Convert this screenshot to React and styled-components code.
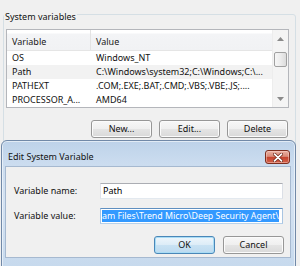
import React from 'react';
import styled, { createGlobalStyle } from 'styled-components';

const Global = createGlobalStyle`
  html, body { margin: 0; padding: 0; }
  body {
    background: #f0f0f0;
    font-family: "Noto Sans", "Open Sans", sans-serif;
    font-size: 9px;
    color: #000;
  }
`;

const Page = styled.div`
  position: relative;
  width: 300px;
  height: 266px;
  overflow: hidden;
  background: #f0f0f0;
  padding-top: 5px;
  box-sizing: border-box;
`;

const GroupBox = styled.fieldset`
  box-sizing: border-box;
  width: 293px;
  min-width: 0;
  margin: 0 0 0 3px;
  padding: 6px 6px 60px 2px;
  border: 1px solid #d5dfe5;
  border-radius: 3px;
`;

const Legend = styled.legend`
  padding: 6px 1px 0;
  margin-left: -2px;
  font-size: 9px;
  line-height: 12px;
  color: #111;
`;

const ListBox = styled.div`
  display: flex;
  width: 283px;
  height: 79px;
  box-sizing: border-box;
  border: 1px solid #b4b6bb;
  background: #fff;
`;

const Table = styled.div`
  flex: 1;
  display: flex;
  flex-direction: column;
  min-width: 0;
`;

const HeaderRow = styled.div`
  display: grid;
  grid-template-columns: 84px 1fr;
  height: 21px;
  background: linear-gradient(#ffffff 0%, #ffffff 15%, #f3f4f6 20%, #f1f2f4 100%);
  border-bottom: 1px solid #e5e5e5;
  box-sizing: border-box;
`;

const HeaderCell = styled.div`
  padding-left: 5px;
  line-height: 23px;
  white-space: nowrap;
  overflow: hidden;
  color: #1a1a1a;
  border-right: ${(p) => (p.$sep ? '1px solid #e3e3e3' : 'none')};
`;

const Row = styled.div`
  display: grid;
  grid-template-columns: 84px 1fr;
  height: 14px;
  background: ${(p) => (p.$hot ? '#f2f2f2' : '#fff')};
`;

const Cell = styled.div`
  padding-left: 5px;
  line-height: 14px;
  white-space: nowrap;
  overflow: ${(p) => (p.$first ? 'visible' : 'hidden')};
  color: #111;
`;

const ScrollBar = styled.div`
  width: 16px;
  display: flex;
  flex-direction: column;
  background: #f4f4f4;
  border-left: 1px solid #ededed;
  box-sizing: border-box;
`;

const Arrow = styled.div`
  height: 17px;
  display: flex;
  align-items: center;
  justify-content: center;
  margin-top: ${(p) => (p.$down ? 'auto' : '0')};
`;

const Thumb = styled.div`
  width: 13px;
  height: 15px;
  margin: 5px 0 0 1px;
  box-sizing: border-box;
  border: 1px solid #a0a0a0;
  border-radius: 2px;
  background: linear-gradient(to right, #f6f6f6, #ececec 50%, #dcdcdc);
`;

const ButtonRow = styled.div`
  display: flex;
  justify-content: flex-end;
  gap: ${(p) => p.$gap}px;
  margin-top: 12px;
  padding-right: ${(p) => p.$right}px;
`;

const Button = styled.button`
  width: ${(p) => p.$w || 61}px;
  height: 18px;
  padding: 0;
  box-sizing: border-box;
  font-family: "Noto Sans", "Open Sans", sans-serif;
  font-size: 9px;
  line-height: 14px;
  color: #111;
  border-radius: 3px;
  border: 1px solid ${(p) => (p.$default ? '#4a87b8' : '#979797')};
  background: ${(p) =>
    p.$default
      ? 'linear-gradient(#eef6fb 0%, #dcecf7 50%, #c9e2f3 51%, #bcdaf0 100%)'
      : 'linear-gradient(#f7f7f7 0%, #efefef 50%, #e4e4e4 51%, #d9d9d9 100%)'};
  box-shadow: inset 0 0 0 1px ${(p) => (p.$default ? '#a9dcf5' : '#fbfbfb')};
`;

const DialogWindow = styled.div`
  position: absolute;
  left: 1px;
  top: 140px;
  width: 295px;
  height: 132px;
  box-sizing: border-box;
  border: 1px solid #7189a8;
  border-radius: 6px 6px 0 0;
  background: linear-gradient(#bdd2e9 0px, #cbdcef 22px, #d4e2f2 60px, #c6d9ed 100%);
  box-shadow: inset 0 0 0 1px rgba(255, 255, 255, 0.55);
  display: flex;
  flex-direction: column;
`;

const TitleBar = styled.div`
  height: 25px;
  box-sizing: border-box;
  display: flex;
  align-items: flex-start;
  justify-content: space-between;
  padding: 9px 5px 0 6px;
`;

const Title = styled.div`
  font-size: 9px;
  line-height: 13px;
  color: #111;
  white-space: nowrap;
`;

const CloseButton = styled.div`
  width: 25px;
  height: 14px;
  box-sizing: border-box;
  border: 1px solid #7d2f20;
  border-radius: 3px;
  background: linear-gradient(#eab1a3 0%, #d98a77 45%, #c6452f 52%, #d2604a 100%);
  box-shadow: inset 0 0 0 1px rgba(255, 220, 210, 0.45);
  display: flex;
  align-items: center;
  justify-content: center;
`;

const Client = styled.div`
  margin: 0 4px 0 3px;
  height: 92px;
  box-sizing: border-box;
  background: #f0f0f0;
  border: 1px solid #a6b9d0;
  padding: 16px 6px 0 8px;
`;

const FormGrid = styled.div`
  display: grid;
  grid-template-columns: 86px 183px;
  row-gap: 9px;
  align-items: center;
`;

const Label = styled.div`
  line-height: 12px;
  white-space: nowrap;
  color: #111;
`;

const TextField = styled.div`
  height: 16px;
  box-sizing: border-box;
  background: #fff;
  border: 1px solid;
  border-color: ${(p) => (p.$focus ? '#5f8fc0 #a9c5e2 #b7d1ea #a9c5e2' : '#abadb3 #dbdfe6 #e3e9ef #e2e3ea')};
  display: flex;
  align-items: center;
  padding: 0 ${(p) => (p.$focus ? 1 : 2)}px;
  overflow: hidden;
  white-space: nowrap;
  line-height: 12px;
`;

const Selected = styled.span`
  background: #3399ff;
  color: #fff;
  font-size: 8.8px;
  line-height: 12px;
`;

const ArrowIcon = ({ down }) => (
  <svg width="7" height="4" viewBox="0 0 7 4">
    <path d={down ? 'M0 0 H7 L3.5 4 Z' : 'M0 4 H7 L3.5 0 Z'} fill="#8a8a8a" />
  </svg>
);

const CloseIcon = () => (
  <svg width="10" height="9" viewBox="0 0 10 9">
    <path d="M1.5 1.2 L8.5 7.8 M8.5 1.2 L1.5 7.8" stroke="#6a2214" strokeWidth="3.2" strokeLinecap="round" />
    <path d="M1.5 1.2 L8.5 7.8 M8.5 1.2 L1.5 7.8" stroke="#ffffff" strokeWidth="1.8" strokeLinecap="round" />
  </svg>
);

const rows = [
  ['OS', 'Windows_NT'],
  ['Path', 'C:\\Windows\\system32;C:\\Windows;C:\\...', true],
  ['PATHEXT', '.COM;.EXE;.BAT;.CMD;.VBS;.VBE;.JS;....'],
  ['PROCESSOR_A...', 'AMD64'],
];

export default function App() {
  return (
    <>
      <Global />
      <Page>
        <GroupBox>
          <Legend>System variables</Legend>
          <ListBox>
            <Table>
              <HeaderRow>
                <HeaderCell $sep>Variable</HeaderCell>
                <HeaderCell>Value</HeaderCell>
              </HeaderRow>
              {rows.map(([name, value, hot]) => (
                <Row key={name} $hot={hot}>
                  <Cell $first>{name}</Cell>
                  <Cell>{value}</Cell>
                </Row>
              ))}
            </Table>
            <ScrollBar>
              <Arrow>
                <ArrowIcon />
              </Arrow>
              <Thumb />
              <Arrow $down>
                <ArrowIcon down />
              </Arrow>
            </ScrollBar>
          </ListBox>
          <ButtonRow $gap={7} $right={1}>
            <Button>New...</Button>
            <Button>Edit...</Button>
            <Button>Delete</Button>
          </ButtonRow>
        </GroupBox>

        <DialogWindow>
          <TitleBar>
            <Title>Edit System Variable</Title>
            <CloseButton>
              <CloseIcon />
            </CloseButton>
          </TitleBar>
          <Client>
            <FormGrid>
              <Label>Variable name:</Label>
              <TextField>Path</TextField>
              <Label>Variable value:</Label>
              <TextField $focus>
                <Selected>am Files\Trend Micro\Deep Security Agent\</Selected>
              </TextField>
            </FormGrid>
            <ButtonRow $gap={8} $right={0}>
              <Button $default>OK</Button>
              <Button>Cancel</Button>
            </ButtonRow>
          </Client>
        </DialogWindow>
      </Page>
    </>
  );
}
